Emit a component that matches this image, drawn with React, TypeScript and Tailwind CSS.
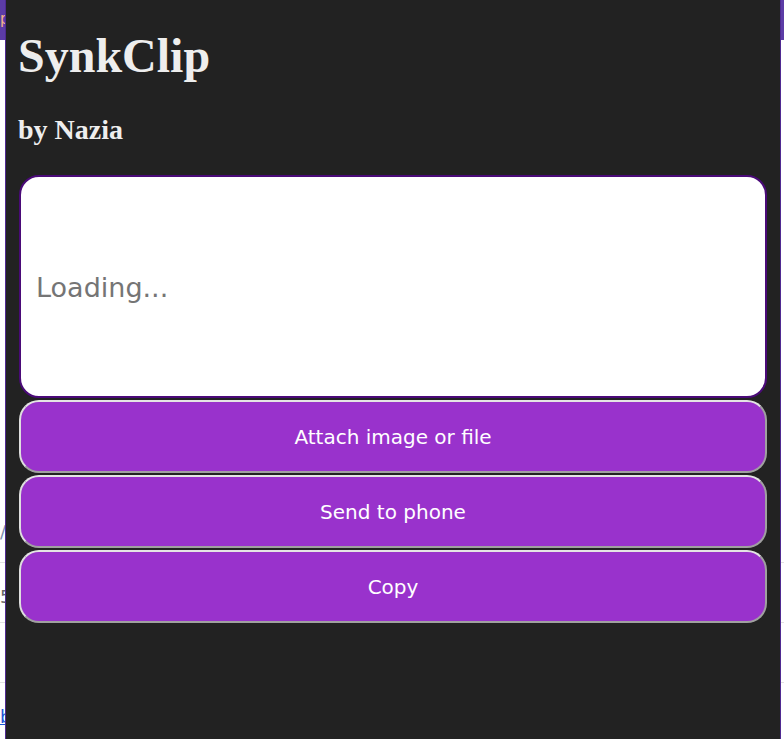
export default function App(): JSX.Element {
  const buttons = ["Attach image or file", "Send to phone", "Copy"];

  return (
    <div className="relative h-[739px] overflow-hidden bg-white font-['DejaVu_Sans',sans-serif]">
      {/* page behind the popup */}
      <div className="h-10 bg-[#5c3ca6] pt-2 text-[15px] text-[#f3b08a]">pp</div>
      <div className="pt-[478px] text-[18px]">
        <div className="h-[45px] border-b border-[#e2e2e2] text-[#7d8fae]">/</div>
        <div className="h-[60px] border-b border-[#e2e2e2] pt-5 text-[#666]">5</div>
        <div className="h-[60px] border-b border-[#e2e2e2]" />
        <div className="pt-5">
          <span className="text-[#1a55d6] underline">b</span>
        </div>
      </div>

      {/* popup panel */}
      <div className="absolute top-0 bottom-0 left-[5px] w-[776px] border-x border-[#4f2a91] bg-[#222222] px-[13px]">
        <h1 className="mt-[32px] -ml-px font-['Liberation_Serif',serif] text-[48px] font-bold leading-[48px] text-[#eeeeee]">
          SynkClip
        </h1>
        <h2 className="mt-[36px] -ml-px font-['Liberation_Serif',serif] text-[28px] font-bold leading-[28px] text-[#eeeeee]">
          by Nazia
        </h2>

        {/* clip box */}
        <div className="mt-[31px] flex h-[223px] items-center rounded-[20px] border-2 border-[#4a0a78] bg-white px-[15px] pt-1">
          <span className="text-[27px] text-[#757575]">Loading...</span>
        </div>

        {/* actions */}
        <div className="mt-[2px] flex flex-col gap-[2px]">
          {buttons.map((label) => (
            <button
              key={label}
              type="button"
              className="flex h-[73px] w-full items-center justify-center rounded-[20px] border-[2.5px] border-t-[#e4e4e4] border-l-[#dedede] border-r-[#a0a0a0] border-b-[#a0a0a0] bg-[#9932cc] text-[20px] text-white"
            >
              {label}
            </button>
          ))}
        </div>
      </div>
    </div>
  );
}
